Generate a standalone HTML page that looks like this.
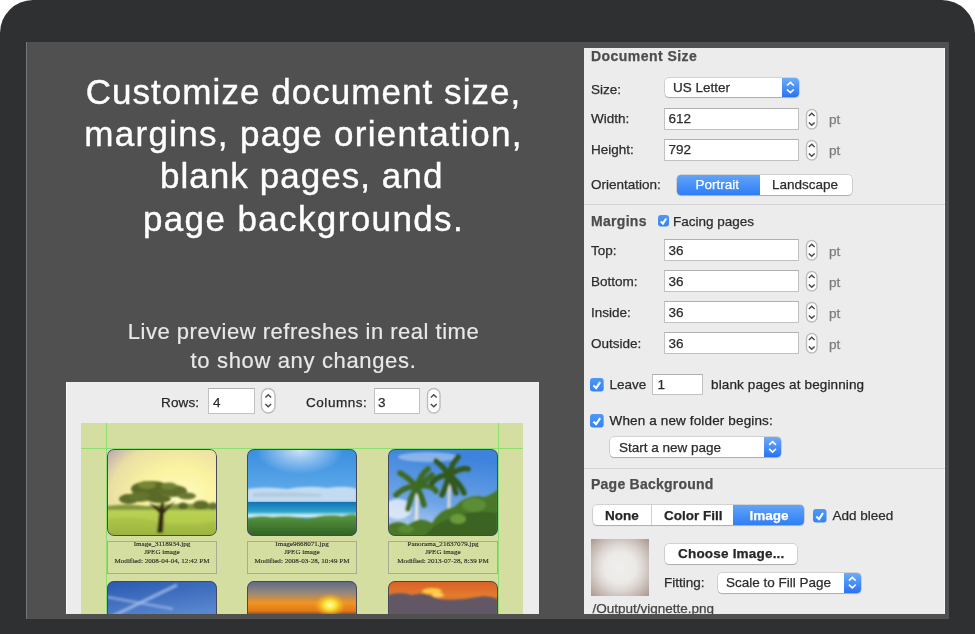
<!DOCTYPE html>
<html><head><meta charset="utf-8">
<style>
*{margin:0;padding:0;box-sizing:border-box}
html,body{width:975px;height:634px;overflow:hidden;background:#fff;font-family:"Liberation Sans",sans-serif;position:relative}
.a{position:absolute}
svg{display:block}
.t{position:absolute;white-space:nowrap;-webkit-text-stroke:0.25px currentColor}
#frame{position:absolute;left:0;top:0;width:975px;height:700px;background:#2f3032;border-radius:33px}
#screen{position:absolute;left:26px;top:42px;width:922.6px;height:577px;background:#505050;border-left:1px solid #777}
.h1{position:absolute;left:27.5px;width:552px;text-align:center;color:#fff;font-size:35px;line-height:42px;letter-spacing:1.05px;white-space:nowrap;-webkit-text-stroke:0.4px #fff}
.sub{position:absolute;left:27.5px;width:552px;text-align:center;color:#e8e8e8;font-size:22px;line-height:29px;letter-spacing:0.5px;white-space:nowrap;-webkit-text-stroke:0.2px #e8e8e8}
#panel{position:absolute;left:584px;top:48px;width:360.6px;height:566px;background:#ececec;border-right:1px solid #f7f7f7}
#clip{position:absolute;left:0;top:0;width:975px;height:614px;overflow:hidden}
.pop{background:#fff;border-radius:4px;box-shadow:0 0 0 0.5px rgba(0,0,0,0.22),0 1px 1px rgba(0,0,0,0.18);overflow:hidden}
.popb{position:absolute;top:0;height:100%;background:linear-gradient(#6cacfa,#2a72f2)}
.seg{background:#fff;border-radius:4px;box-shadow:0 0 0 0.5px rgba(0,0,0,0.22),0 1px 1px rgba(0,0,0,0.18);overflow:hidden}
.segsel{position:absolute;top:0;height:100%;background:linear-gradient(#62a4fa,#2f7ef5)}
.btn{background:#fff;border-radius:4px;box-shadow:0 0 0 0.5px rgba(0,0,0,0.22),0 1px 1px rgba(0,0,0,0.18)}
.thumb{border-radius:7px;overflow:hidden;}
.thumb svg{position:absolute;left:0;top:0}
.thumbo{position:absolute;inset:0;border-radius:7px;border:1.4px solid #44485a}
.cap{border:1.2px solid #a6ac96}
.capi{position:absolute;left:-5px;right:-5px;top:-2.4px;font-family:"Liberation Serif",serif;font-size:7.1px;line-height:8.5px;text-align:center;color:#2e2e26;-webkit-text-stroke:0.15px #2e2e26}
</style></head><body>
<div id="root" style="position:absolute;left:0;top:0;width:975px;height:634px;overflow:hidden;will-change:transform">
<div id="frame"></div>
<div id="screen"></div>
<div class="h1" style="top:70.5px">Customize document size,</div>
<div class="h1" style="top:113px;letter-spacing:1.3px">margins, page orientation,</div>
<div class="h1" style="top:154.7px;margin-left:-1.8px">blank pages, and</div>
<div class="h1" style="top:198px;letter-spacing:1.38px">page backgrounds.</div>
<div class="sub" style="top:317px">Live preview refreshes in real time</div>
<div class="sub" style="top:346px;letter-spacing:0.65px">to show any changes.</div>
<div id="clip">
<div class="a" style="left:66px;top:382px;width:473.00px;height:232.00px;background:#ececec;border-left:1px solid #fafafa"></div>
<div class="t" style="left:161.0px;top:395.77px;font-size:13.5px;line-height:13.5px;font-weight:normal;color:#262626;letter-spacing:0.15px">Rows:</div>
<div class="a" style="left:208px;top:388px;width:47.00px;height:25.50px;background:#fff;border:1px solid #c2c2c2;border-top-color:#b0b0b0"></div>
<div class="t" style="left:213.0px;top:395.77px;font-size:13.5px;line-height:13.5px;font-weight:normal;color:#2c2c2c;">4</div>
<svg class="a" style="left:261px;top:388px;overflow:visible" width="14.5" height="25.5" viewBox="0 0 14.5 25.5"><rect x="0.5" y="0.5" width="13.5" height="24.5" rx="6.75" fill="#fff" stroke="#bdbdbd" stroke-width="1.4"/><path d="M4.35 9.55 L7.25 6.75 L10.15 9.55 M4.35 15.95 L7.25 18.75 L10.15 15.95" fill="none" stroke="#4a4a4a" stroke-width="1.5"/></svg>
<div class="t" style="left:306.0px;top:395.77px;font-size:13.5px;line-height:13.5px;font-weight:normal;color:#262626;letter-spacing:0.55px">Columns:</div>
<div class="a" style="left:373.5px;top:388px;width:46.50px;height:25.50px;background:#fff;border:1px solid #c2c2c2;border-top-color:#b0b0b0"></div>
<div class="t" style="left:378.0px;top:395.77px;font-size:13.5px;line-height:13.5px;font-weight:normal;color:#2c2c2c;">3</div>
<svg class="a" style="left:427px;top:388px;overflow:visible" width="13.5" height="25.5" viewBox="0 0 13.5 25.5"><rect x="0.5" y="0.5" width="12.5" height="24.5" rx="6.25" fill="#fff" stroke="#bdbdbd" stroke-width="1.4"/><path d="M3.85 9.55 L6.75 6.75 L9.65 9.55 M3.85 15.95 L6.75 18.75 L9.65 15.95" fill="none" stroke="#4a4a4a" stroke-width="1.5"/></svg>
<div class="a" style="left:80.5px;top:423px;width:442.50px;height:191.00px;background:#d5dea1"></div>
<div class="a" style="left:81px;top:448px;width:442.00px;height:1.00px;background:#8be071"></div>
<div class="a" style="left:106px;top:423px;width:1.00px;height:191.00px;background:#8be071"></div>
<div class="a" style="left:497.5px;top:423px;width:1.00px;height:191.00px;background:#8be071"></div>
<div class="a thumb" style="left:107px;top:448.5px;width:110px;height:87.5px"><svg width="110" height="88" viewBox="0 0 110 88" preserveAspectRatio="none"><defs>
<radialGradient id="sky1" cx="0.66" cy="0.55" r="0.85"><stop offset="0" stop-color="#fffcc4"/><stop offset="0.4" stop-color="#faf3a0"/><stop offset="0.75" stop-color="#eadfa4"/><stop offset="1" stop-color="#b8a4b0"/></radialGradient>
<linearGradient id="gr1" x1="0" y1="0" x2="0" y2="1"><stop offset="0" stop-color="#bcd254"/><stop offset="0.5" stop-color="#b4cc4c"/><stop offset="1" stop-color="#94ac3a"/></linearGradient>
<filter id="bl1" x="-10%" y="-10%" width="120%" height="120%"><feGaussianBlur stdDeviation="0.8"/></filter></defs>
<rect width="110" height="88" fill="url(#sky1)"/>
<g filter="url(#bl1)">
<rect y="58" width="110" height="30" fill="url(#gr1)"/>
<path d="M0 70 Q30 66 55 74 Q80 78 110 72 L110 88 L0 88Z" fill="#a0b840" opacity="0.5"/>
<path d="M0 57 Q20 54 40 57 Q70 53 110 56 L110 61 L0 61Z" fill="#849640"/>
<ellipse cx="76" cy="57" rx="5" ry="3.5" fill="#566626"/><ellipse cx="94" cy="56" rx="8" ry="4.5" fill="#5e6e2c"/><ellipse cx="106" cy="57" rx="5" ry="3.5" fill="#667630"/>
<path d="M50 84 L52 64 L42 54 L53 59 L56 48 L57 60 L68 52 L57 65 L56 84Z" fill="#342a14"/>
<ellipse cx="22" cy="50" rx="10" ry="5" fill="#5c6c2a"/>
<ellipse cx="44" cy="40" rx="20" ry="8" fill="#5a6a28"/>
<ellipse cx="66" cy="42" rx="14" ry="6" fill="#606e2c"/>
<ellipse cx="33" cy="48" rx="12" ry="5" fill="#64742e"/>
<ellipse cx="80" cy="47" rx="9" ry="3.5" fill="#6a7832"/>
<ellipse cx="52" cy="50" rx="12" ry="4" fill="#5a6a28"/>
<ellipse cx="40" cy="36" rx="9" ry="4" fill="#768636"/><ellipse cx="62" cy="37" rx="8" ry="3.5" fill="#728234"/>
</g>
</svg><div class="thumbo"></div></div>
<div class="a cap" style="left:107px;top:541px;width:110px;height:32.5px"><div class="capi"><div>Image_3118934.jpg</div><div>JPEG image</div><div>Modified: 2008-04-04, 12:42 PM</div></div></div>
<div class="a thumb" style="left:107px;top:580.5px;width:110px;height:60px"><svg width="110" height="40" viewBox="0 0 110 40" preserveAspectRatio="none"><defs>
<linearGradient id="sky4" x1="0" y1="0" x2="0.4" y2="1"><stop offset="0" stop-color="#2a58b0"/><stop offset="1" stop-color="#5a88d0"/></linearGradient>
<filter id="bl4"><feGaussianBlur stdDeviation="1.2"/></filter></defs>
<rect width="110" height="40" fill="url(#sky4)"/>
<g filter="url(#bl4)"><path d="M4 36 L70 4" stroke="#a8c4ec" stroke-width="3.5" opacity="0.7"/><path d="M0 16 L66 28" stroke="#a0bce8" stroke-width="3" opacity="0.6"/></g>
</svg><div class="thumbo"></div></div>
<div class="a thumb" style="left:247px;top:448.5px;width:110px;height:87.5px"><svg width="110" height="88" viewBox="0 0 110 88" preserveAspectRatio="none"><defs>
<linearGradient id="sky2" x1="0" y1="0" x2="0" y2="1"><stop offset="0" stop-color="#3a8ee0"/><stop offset="0.44" stop-color="#5aa6e8"/><stop offset="1" stop-color="#5aa6e8"/></linearGradient>
<radialGradient id="sun2" cx="0.48" cy="0.02" r="0.4"><stop offset="0" stop-color="#ffffff" stop-opacity="0.75"/><stop offset="1" stop-color="#ffffff" stop-opacity="0"/></radialGradient>
<linearGradient id="sea2" x1="0" y1="0" x2="0" y2="1"><stop offset="0" stop-color="#1670b4"/><stop offset="0.6" stop-color="#2aa0c8"/><stop offset="1" stop-color="#9adce8"/></linearGradient>
<linearGradient id="veg2" x1="0" y1="0" x2="0" y2="1"><stop offset="0" stop-color="#5a9a40"/><stop offset="1" stop-color="#2a5a22"/></linearGradient>
<filter id="bl2" x="-10%" y="-10%" width="120%" height="120%"><feGaussianBlur stdDeviation="1"/></filter></defs>
<rect width="110" height="88" fill="url(#sky2)"/><rect width="110" height="60" fill="url(#sun2)"/>
<g filter="url(#bl2)"><path d="M0 40 Q20 37 40 40 Q60 36 80 39 Q100 36 110 40 L110 53 L0 53Z" fill="#dce8f2" opacity="0.8"/>
<path d="M6 44 Q40 42 74 45 L74 48 L6 48Z" fill="#a8bccc" opacity="0.5"/></g>
<rect y="53" width="110" height="15" fill="url(#sea2)"/>
<g filter="url(#bl2)"><rect y="65" width="110" height="3" fill="#d8f2f4" opacity="0.8"/>
<path d="M0 70 Q10 65 25 68 Q45 66 60 70 Q80 64 95 67 Q105 64 110 66 L110 90 L0 90Z" fill="url(#veg2)"/></g>
</svg><div class="thumbo"></div></div>
<div class="a cap" style="left:247px;top:541px;width:110px;height:32.5px"><div class="capi"><div>Image9668071.jpg</div><div>JPEG image</div><div>Modified: 2008-03-28, 10:49 PM</div></div></div>
<div class="a thumb" style="left:247px;top:580.5px;width:110px;height:60px"><svg width="110" height="40" viewBox="0 0 110 40" preserveAspectRatio="none"><defs>
<linearGradient id="sky5" x1="0" y1="0" x2="0" y2="1"><stop offset="0" stop-color="#5a6a88"/><stop offset="0.3" stop-color="#98887a"/><stop offset="0.55" stop-color="#f09420"/><stop offset="0.75" stop-color="#e07818"/><stop offset="0.88" stop-color="#5a3830"/><stop offset="1" stop-color="#4a3436"/></linearGradient>
<radialGradient id="sun5" cx="0.5" cy="0.5" r="0.5"><stop offset="0" stop-color="#ffffb0"/><stop offset="0.4" stop-color="#f8e030"/><stop offset="1" stop-color="#f8a020" stop-opacity="0"/></radialGradient></defs>
<rect width="110" height="40" fill="url(#sky5)"/><ellipse cx="83" cy="24" rx="16" ry="12" fill="url(#sun5)"/>
</svg><div class="thumbo"></div></div>
<div class="a thumb" style="left:388px;top:448.5px;width:110px;height:87.5px"><svg width="110" height="88" viewBox="0 0 110 88" preserveAspectRatio="none"><defs>
<linearGradient id="sky3" x1="0.2" y1="0" x2="0" y2="1"><stop offset="0" stop-color="#3e84dc"/><stop offset="0.55" stop-color="#6ea4e6"/><stop offset="1" stop-color="#c8dcf2"/></linearGradient>
<filter id="bl3" x="-10%" y="-10%" width="120%" height="120%"><feGaussianBlur stdDeviation="1.1"/></filter></defs>
<rect width="110" height="88" fill="url(#sky3)"/>
<g filter="url(#bl3)">
<ellipse cx="10" cy="60" rx="14" ry="10" fill="#eef4fa" opacity="0.75"/>
<ellipse cx="40" cy="8" rx="30" ry="5" fill="#cfe0f4" opacity="0.5"/>
<path d="M26 88 L27.5 44 L30.5 44 L30 88Z" fill="#e4e4d8"/>
<path d="M59 74 L60 30 L63 30 L62 74Z" fill="#d8d8cc"/>
<path d="M29 38 Q18 36 8 46 M29 38 Q20 28 12 24 M29 38 Q32 26 40 20 M29 38 Q42 34 48 42 M29 38 Q22 48 20 60 M29 38 Q34 48 36 56 M29 38 Q40 30 44 26" fill="none" stroke="#3c6a24" stroke-width="5.5" stroke-linecap="round"/>
<path d="M61 26 Q50 26 44 34 M61 26 Q54 16 48 12 M61 26 Q64 14 70 8 M61 26 Q74 18 80 20 M61 26 Q72 34 76 44 M61 26 Q58 38 54 46 M61 26 Q66 38 68 44" fill="none" stroke="#30581c" stroke-width="5.5" stroke-linecap="round"/>
<path d="M0 88 L0 76 Q10 70 20 76 Q32 66 44 74 Q52 60 66 58 Q80 44 96 48 Q104 46 110 40 L110 88Z" fill="#4a7828"/>
<path d="M36 88 Q46 74 62 70 Q80 60 110 64 L110 88Z" fill="#3a6420"/>
<ellipse cx="86" cy="56" rx="12" ry="7" fill="#5c8c34"/><ellipse cx="70" cy="70" rx="8" ry="5" fill="#6a9a3a"/><ellipse cx="18" cy="80" rx="8" ry="4" fill="#5a8a32"/>
</g>
</svg><div class="thumbo"></div></div>
<div class="a cap" style="left:388px;top:541px;width:110px;height:32.5px"><div class="capi"><div>Panorama_21637079.jpg</div><div>JPEG image</div><div>Modified: 2013-07-28, 8:39 PM</div></div></div>
<div class="a thumb" style="left:388px;top:580.5px;width:110px;height:60px"><svg width="110" height="40" viewBox="0 0 110 40" preserveAspectRatio="none"><defs>
<linearGradient id="sky6" x1="0" y1="0" x2="0" y2="1"><stop offset="0" stop-color="#d86028"/><stop offset="0.35" stop-color="#e47a2c"/><stop offset="1" stop-color="#c07040"/></linearGradient>
<filter id="bl6"><feGaussianBlur stdDeviation="1.3"/></filter></defs>
<rect width="110" height="40" fill="url(#sky6)"/>
<g filter="url(#bl6)"><path d="M0 40 L0 14 Q12 10 24 14 Q36 10 50 18 Q70 20 90 16 Q100 14 110 18 L110 40Z" fill="#585468" opacity="0.92"/>
<ellipse cx="44" cy="10" rx="10" ry="3" fill="#ffd040" opacity="0.95"/><ellipse cx="50" cy="14" rx="6" ry="2" fill="#ffe070" opacity="0.85"/></g>
</svg><div class="thumbo"></div></div>
<div id="panel"></div>
<div class="t" style="left:591.0px;top:49.35px;font-size:14px;line-height:14px;font-weight:bold;color:#4d4d4d;letter-spacing:0.45px">Document Size</div>
<div class="t" style="left:591.0px;top:82.57px;font-size:13.5px;line-height:13.5px;font-weight:normal;color:#2c2c2c;">Size:</div>
<div class="a pop" style="left:665.0px;top:78.4px;width:133.60px;height:19.00px"><div class="popb" style="left:116.80px;width:16.80px"></div></div>
<svg class="a" style="left:781.8px;top:78.4px" width="16.80" height="19.00"><path d="M5.000000000000034 7.499999999999993 L8.400000000000034 4.299999999999993 L11.800000000000034 7.499999999999993 M5.000000000000034 11.499999999999993 L8.400000000000034 14.699999999999992 L11.800000000000034 11.499999999999993" fill="none" stroke="#fff" stroke-width="1.6"/></svg>
<div class="t" style="left:673.0px;top:81.07px;font-size:13.5px;line-height:13.5px;font-weight:normal;color:#2c2c2c;">US Letter</div>
<div class="t" style="left:591.0px;top:112.27px;font-size:13.5px;line-height:13.5px;font-weight:normal;color:#2c2c2c;">Width:</div>
<div class="a" style="left:664px;top:108px;width:134.50px;height:21.50px;background:#fff;border:1px solid #c2c2c2;border-top-color:#b0b0b0"></div>
<div class="t" style="left:668.5px;top:112.27px;font-size:13.5px;line-height:13.5px;font-weight:normal;color:#2c2c2c;">612</div>
<svg class="a" style="left:806px;top:108.7px;overflow:visible" width="11.5" height="20.499999999999986" viewBox="0 0 11.5 20.499999999999986"><rect x="0.5" y="0.5" width="10.5" height="19.499999999999986" rx="5.25" fill="#fff" stroke="#bdbdbd" stroke-width="1.4"/><path d="M2.85 7.049999999999993 L5.75 4.249999999999993 L8.65 7.049999999999993 M2.85 13.449999999999992 L5.75 16.249999999999993 L8.65 13.449999999999992" fill="none" stroke="#4a4a4a" stroke-width="1.5"/></svg>
<div class="t" style="left:829.0px;top:112.97px;font-size:13.5px;line-height:13.5px;font-weight:normal;color:#7c7c7c;">pt</div>
<div class="t" style="left:591.0px;top:143.07px;font-size:13.5px;line-height:13.5px;font-weight:normal;color:#2c2c2c;">Height:</div>
<div class="a" style="left:664px;top:139px;width:134.50px;height:21.50px;background:#fff;border:1px solid #c2c2c2;border-top-color:#b0b0b0"></div>
<div class="t" style="left:668.5px;top:143.07px;font-size:13.5px;line-height:13.5px;font-weight:normal;color:#2c2c2c;">792</div>
<svg class="a" style="left:806px;top:139.7px;overflow:visible" width="11.5" height="20.5" viewBox="0 0 11.5 20.5"><rect x="0.5" y="0.5" width="10.5" height="19.5" rx="5.25" fill="#fff" stroke="#bdbdbd" stroke-width="1.4"/><path d="M2.85 7.05 L5.75 4.25 L8.65 7.05 M2.85 13.45 L5.75 16.25 L8.65 13.45" fill="none" stroke="#4a4a4a" stroke-width="1.5"/></svg>
<div class="t" style="left:829.0px;top:143.77px;font-size:13.5px;line-height:13.5px;font-weight:normal;color:#7c7c7c;">pt</div>
<div class="t" style="left:591.0px;top:177.77px;font-size:13.5px;line-height:13.5px;font-weight:normal;color:#2c2c2c;">Orientation:</div>
<div class="a seg" style="left:676.5px;top:174.5px;width:175px;height:20.5px"><div class="segsel" style="left:0;width:83px"></div></div>
<div class="t" style="left:695.5px;top:177.77px;font-size:13.5px;line-height:13.5px;font-weight:normal;color:#fff;">Portrait</div>
<div class="t" style="left:772.0px;top:177.77px;font-size:13.5px;line-height:13.5px;font-weight:normal;color:#2c2c2c;">Landscape</div>
<div class="a" style="left:584px;top:204px;width:361.00px;height:1.00px;background:#d4d4d4"></div>
<div class="t" style="left:591.0px;top:214.15px;font-size:14px;line-height:14px;font-weight:bold;color:#4d4d4d;letter-spacing:0.3px">Margins</div>
<svg class="a" style="left:658px;top:215px" width="11" height="11.5" viewBox="0 0 11 11.5"><defs><linearGradient id="cbg" x1="0" y1="0" x2="0" y2="1"><stop offset="0" stop-color="#4d98f7"/><stop offset="1" stop-color="#3584f2"/></linearGradient></defs><rect x="0" y="0" width="11" height="11.5" rx="3" fill="url(#cbg)"/><path d="M2.75 6.44 L4.95 8.625 L8.14 3.4499999999999997" fill="none" stroke="#fff" stroke-width="2.1"/></svg>
<div class="t" style="left:673.0px;top:214.57px;font-size:13.5px;line-height:13.5px;font-weight:normal;color:#2c2c2c;">Facing pages</div>
<div class="t" style="left:591.0px;top:244.17px;font-size:13.5px;line-height:13.5px;font-weight:normal;color:#2c2c2c;">Top:</div>
<div class="a" style="left:664px;top:239px;width:134.50px;height:21.50px;background:#fff;border:1px solid #c2c2c2;border-top-color:#b0b0b0"></div>
<div class="t" style="left:668.5px;top:244.17px;font-size:13.5px;line-height:13.5px;font-weight:normal;color:#2c2c2c;">36</div>
<svg class="a" style="left:806px;top:239.7px;overflow:visible" width="11.5" height="20.5" viewBox="0 0 11.5 20.5"><rect x="0.5" y="0.5" width="10.5" height="19.5" rx="5.25" fill="#fff" stroke="#bdbdbd" stroke-width="1.4"/><path d="M2.85 7.05 L5.75 4.25 L8.65 7.05 M2.85 13.45 L5.75 16.25 L8.65 13.45" fill="none" stroke="#4a4a4a" stroke-width="1.5"/></svg>
<div class="t" style="left:829.0px;top:245.37px;font-size:13.5px;line-height:13.5px;font-weight:normal;color:#7c7c7c;">pt</div>
<div class="t" style="left:591.0px;top:275.17px;font-size:13.5px;line-height:13.5px;font-weight:normal;color:#2c2c2c;">Bottom:</div>
<div class="a" style="left:664px;top:270px;width:134.50px;height:21.50px;background:#fff;border:1px solid #c2c2c2;border-top-color:#b0b0b0"></div>
<div class="t" style="left:668.5px;top:275.17px;font-size:13.5px;line-height:13.5px;font-weight:normal;color:#2c2c2c;">36</div>
<svg class="a" style="left:806px;top:270.7px;overflow:visible" width="11.5" height="20.5" viewBox="0 0 11.5 20.5"><rect x="0.5" y="0.5" width="10.5" height="19.5" rx="5.25" fill="#fff" stroke="#bdbdbd" stroke-width="1.4"/><path d="M2.85 7.05 L5.75 4.25 L8.65 7.05 M2.85 13.45 L5.75 16.25 L8.65 13.45" fill="none" stroke="#4a4a4a" stroke-width="1.5"/></svg>
<div class="t" style="left:829.0px;top:276.37px;font-size:13.5px;line-height:13.5px;font-weight:normal;color:#7c7c7c;">pt</div>
<div class="t" style="left:591.0px;top:306.17px;font-size:13.5px;line-height:13.5px;font-weight:normal;color:#2c2c2c;">Inside:</div>
<div class="a" style="left:664px;top:301px;width:134.50px;height:21.50px;background:#fff;border:1px solid #c2c2c2;border-top-color:#b0b0b0"></div>
<div class="t" style="left:668.5px;top:306.17px;font-size:13.5px;line-height:13.5px;font-weight:normal;color:#2c2c2c;">36</div>
<svg class="a" style="left:806px;top:301.7px;overflow:visible" width="11.5" height="20.5" viewBox="0 0 11.5 20.5"><rect x="0.5" y="0.5" width="10.5" height="19.5" rx="5.25" fill="#fff" stroke="#bdbdbd" stroke-width="1.4"/><path d="M2.85 7.05 L5.75 4.25 L8.65 7.05 M2.85 13.45 L5.75 16.25 L8.65 13.45" fill="none" stroke="#4a4a4a" stroke-width="1.5"/></svg>
<div class="t" style="left:829.0px;top:307.37px;font-size:13.5px;line-height:13.5px;font-weight:normal;color:#7c7c7c;">pt</div>
<div class="t" style="left:591.0px;top:337.17px;font-size:13.5px;line-height:13.5px;font-weight:normal;color:#2c2c2c;">Outside:</div>
<div class="a" style="left:664px;top:332px;width:134.50px;height:21.50px;background:#fff;border:1px solid #c2c2c2;border-top-color:#b0b0b0"></div>
<div class="t" style="left:668.5px;top:337.17px;font-size:13.5px;line-height:13.5px;font-weight:normal;color:#2c2c2c;">36</div>
<svg class="a" style="left:806px;top:332.7px;overflow:visible" width="11.5" height="20.5" viewBox="0 0 11.5 20.5"><rect x="0.5" y="0.5" width="10.5" height="19.5" rx="5.25" fill="#fff" stroke="#bdbdbd" stroke-width="1.4"/><path d="M2.85 7.05 L5.75 4.25 L8.65 7.05 M2.85 13.45 L5.75 16.25 L8.65 13.45" fill="none" stroke="#4a4a4a" stroke-width="1.5"/></svg>
<div class="t" style="left:829.0px;top:338.37px;font-size:13.5px;line-height:13.5px;font-weight:normal;color:#7c7c7c;">pt</div>
<svg class="a" style="left:590px;top:378.2px" width="13.700000000000045" height="13.5" viewBox="0 0 13.700000000000045 13.5"><defs><linearGradient id="cbg" x1="0" y1="0" x2="0" y2="1"><stop offset="0" stop-color="#4d98f7"/><stop offset="1" stop-color="#3584f2"/></linearGradient></defs><rect x="0" y="0" width="13.700000000000045" height="13.5" rx="3" fill="url(#cbg)"/><path d="M3.4250000000000114 7.5600000000000005 L6.1650000000000205 10.125 L10.138000000000034 4.05" fill="none" stroke="#fff" stroke-width="2.1"/></svg>
<div class="t" style="left:609.5px;top:378.37px;font-size:13.5px;line-height:13.5px;font-weight:normal;color:#2c2c2c;">Leave</div>
<div class="a" style="left:652.2px;top:373.5px;width:50.50px;height:21.50px;background:#fff;border:1px solid #c2c2c2;border-top-color:#b0b0b0"></div>
<div class="t" style="left:657.5px;top:378.37px;font-size:13.5px;line-height:13.5px;font-weight:normal;color:#2c2c2c;">1</div>
<div class="t" style="left:711.0px;top:378.37px;font-size:13.5px;line-height:13.5px;font-weight:normal;color:#262626;letter-spacing:0.13px">blank pages at beginning</div>
<svg class="a" style="left:590px;top:414.2px" width="13.700000000000045" height="13.600000000000023" viewBox="0 0 13.700000000000045 13.600000000000023"><defs><linearGradient id="cbg" x1="0" y1="0" x2="0" y2="1"><stop offset="0" stop-color="#4d98f7"/><stop offset="1" stop-color="#3584f2"/></linearGradient></defs><rect x="0" y="0" width="13.700000000000045" height="13.600000000000023" rx="3" fill="url(#cbg)"/><path d="M3.4250000000000114 7.616000000000014 L6.1650000000000205 10.200000000000017 L10.138000000000034 4.080000000000006" fill="none" stroke="#fff" stroke-width="2.1"/></svg>
<div class="t" style="left:609.5px;top:413.97px;font-size:13.5px;line-height:13.5px;font-weight:normal;color:#262626;letter-spacing:0.14px">When a new folder begins:</div>
<div class="a pop" style="left:610.4px;top:437.4px;width:170.70px;height:19.70px"><div class="popb" style="left:153.60px;width:17.10px"></div></div>
<svg class="a" style="left:764px;top:437.4px" width="17.10" height="19.70"><path d="M5.150000000000011 7.850000000000023 L8.550000000000011 4.650000000000023 L11.950000000000012 7.850000000000023 M5.150000000000011 11.850000000000023 L8.550000000000011 15.050000000000022 L11.950000000000012 11.850000000000023" fill="none" stroke="#fff" stroke-width="1.6"/></svg>
<div class="t" style="left:619.0px;top:440.57px;font-size:13.5px;line-height:13.5px;font-weight:normal;color:#2c2c2c;">Start a new page</div>
<div class="a" style="left:584px;top:468px;width:361.00px;height:1.00px;background:#d4d4d4"></div>
<div class="t" style="left:591.0px;top:476.85px;font-size:14px;line-height:14px;font-weight:bold;color:#4d4d4d;letter-spacing:0.24px">Page Background</div>
<div class="a seg" style="left:592.5px;top:505.3px;width:211.5px;height:20.2px"><div class="segsel" style="left:140.5px;width:71px"></div><div class="a" style="left:58px;top:0;width:1px;height:100%;background:#d0d0d0"></div></div>
<div class="t" style="left:605.0px;top:509.17px;font-size:13.5px;line-height:13.5px;font-weight:bold;color:#262626;">None</div>
<div class="t" style="left:664.0px;top:509.17px;font-size:13.5px;line-height:13.5px;font-weight:bold;color:#262626;">Color Fill</div>
<div class="t" style="left:749.5px;top:508.97px;font-size:13.5px;line-height:13.5px;font-weight:bold;color:#fff;">Image</div>
<svg class="a" style="left:813px;top:509px" width="13.5" height="13.5" viewBox="0 0 13.5 13.5"><defs><linearGradient id="cbg" x1="0" y1="0" x2="0" y2="1"><stop offset="0" stop-color="#4d98f7"/><stop offset="1" stop-color="#3584f2"/></linearGradient></defs><rect x="0" y="0" width="13.5" height="13.5" rx="3" fill="url(#cbg)"/><path d="M3.375 7.5600000000000005 L6.075 10.125 L9.99 4.05" fill="none" stroke="#fff" stroke-width="2.1"/></svg>
<div class="t" style="left:832.5px;top:508.57px;font-size:13.5px;line-height:13.5px;font-weight:normal;color:#2c2c2c;">Add bleed</div>
<div class="a" style="left:591px;top:538.5px;width:57.50px;height:57.50px;background:radial-gradient(circle at 50% 50%,#f1efed 0%,#eceae7 38%,#dcd5d1 58%,#c2b6b0 80%,#a8978f 100%)"></div>
<div class="a btn" style="left:664.5px;top:544px;width:132px;height:19.5px"></div>
<div class="t" style="left:678.0px;top:547.07px;font-size:13.5px;line-height:13.5px;font-weight:bold;color:#262626;letter-spacing:0.2px">Choose Image...</div>
<div class="t" style="left:664.0px;top:575.77px;font-size:13.5px;line-height:13.5px;font-weight:normal;color:#2c2c2c;">Fitting:</div>
<div class="a pop" style="left:717.9px;top:573.4px;width:142.70px;height:19.20px"><div class="popb" style="left:126.10px;width:16.60px"></div></div>
<svg class="a" style="left:844px;top:573.4px" width="16.60" height="19.20"><path d="M4.900000000000011 7.600000000000023 L8.300000000000011 4.400000000000023 L11.700000000000012 7.600000000000023 M4.900000000000011 11.600000000000023 L8.300000000000011 14.800000000000022 L11.700000000000012 11.600000000000023" fill="none" stroke="#fff" stroke-width="1.6"/></svg>
<div class="t" style="left:726.0px;top:575.57px;font-size:13.5px;line-height:13.5px;font-weight:normal;color:#2c2c2c;">Scale to Fill Page</div>
<div class="t" style="left:592.5px;top:601.57px;font-size:13.5px;line-height:13.5px;font-weight:normal;color:#444;">/Output/vignette.png</div>
</div>
</div>
</body></html>
